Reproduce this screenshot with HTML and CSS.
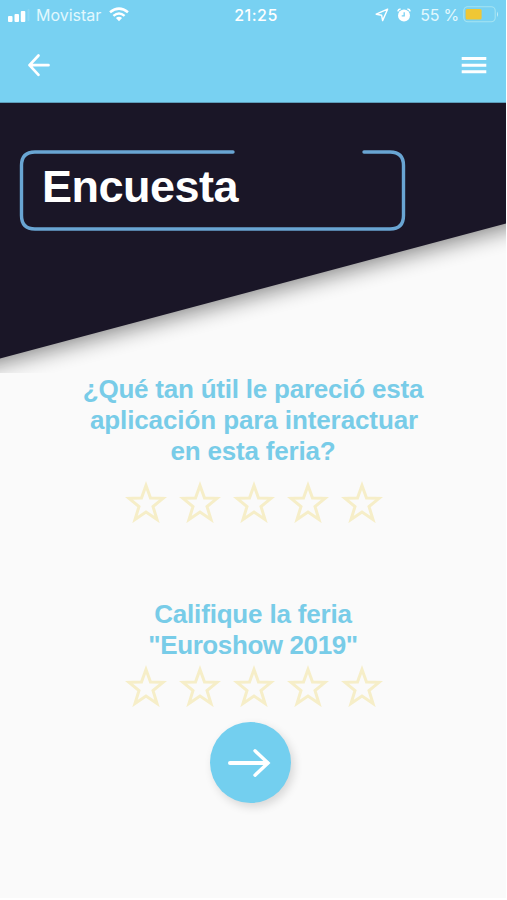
FILE: index.html
```html
<!DOCTYPE html>
<html lang="es">
<head>
<meta charset="utf-8">
<meta name="viewport" content="width=device-width, initial-scale=1">
<title>Encuesta</title>
<link rel="stylesheet" href="styles.css">
</head>
<body>
<svg class="defs" width="0" height="0" aria-hidden="true">
  <symbol id="star" viewBox="0 0 42 42">
    <path d="M21 4.500 L25.500 17 L38 17.300 L28 25.500 L32 38.500 L21 31 L10 38.500 L14 25.500 L4 17.300 L16.500 17 Z" fill="none" stroke="currentColor" stroke-width="3"/>
  </symbol>
</svg>
<div class="screen">
  <header class="topbar">
    <div class="status">
      <div class="status-left">
        <svg class="signal" width="24" height="14" viewBox="0 0 24 14"><g fill="#fff"><rect x="0" y="8" width="4.500" height="6" rx="1"/><rect x="6.500" y="6" width="4.500" height="8" rx="1"/><rect x="12.800" y="3" width="4.500" height="11" rx="1"/><rect x="19.500" y="1" width="2" height="12" rx="1" opacity=".15"/></g></svg>
        <span class="carrier">Movistar</span>
        <svg class="wifi" width="20" height="15" viewBox="0 0 20 15" fill="none" stroke="#fff" stroke-width="2.500"><path d="M1 5.300 Q10 -2 19 5.300"/><path d="M4.400 8.900 Q10 4.200 15.600 8.900"/><path d="M6.900 11 Q10 8.600 13.100 11 L10 14.200Z" fill="#fff" stroke="none"/></svg>
      </div>
      <span class="time">21:25</span>
      <div class="status-right">
        <svg class="location" width="14" height="14" viewBox="0 0 14 14" fill="none" stroke="#fff" stroke-width="1.400" stroke-linejoin="round"><path d="M12.600 1.200 L1.200 6.200 L6.600 7.200 L7.600 12.600 Z"/></svg>
        <svg class="alarm" width="14" height="14" viewBox="0 0 14 14"><circle cx="7" cy="7.600" r="6" fill="#fff"/><path d="M.8 3.300 Q1.200 1.200 3.600 1M13.200 3.300 Q12.800 1.200 10.400 1" fill="none" stroke="#fff" stroke-width="1.500"/><path d="M7.200 4.200 V7.800 H4.700" fill="none" stroke="#78d1f2" stroke-width="1.300"/></svg>
        <span class="percent">55 %</span>
        <svg class="battery" width="36" height="17" viewBox="0 0 36 17"><rect x=".8" y=".8" width="31.400" height="15" rx="4" fill="none" stroke="#a5e4f2" stroke-width="1.100"/><rect x="2.600" y="3" width="16" height="10.600" rx="1.500" fill="#efc735"/><path d="M34 5.500 Q36 8.300 34 11Z" fill="#c4edf7"/></svg>
      </div>
    </div>
    <nav class="nav">
      <svg width="24" height="24" viewBox="0 0 24 24" fill="none" stroke="#fff" stroke-width="2.700" stroke-linecap="round" stroke-linejoin="round" role="img" aria-label="Volver"><path d="M21.500 12.200 H2.500 M11.500 2.500 L2.500 12.200 L11.500 21.800"/></svg>
      <svg width="26" height="18" viewBox="0 0 26 18" stroke="#fff" stroke-width="2.900" role="img" aria-label="Menú"><path d="M.7 2.500 H25.300 M.7 9.200 H25.300 M.7 15.800 H25.300"/></svg>
    </nav>
  </header>
  <section class="hero">
    <svg class="hero-shape" width="506" height="270" viewBox="0 0 506 270" aria-hidden="true">
      <defs>
        <filter id="soft" x="-20%" y="-20%" width="140%" height="140%"><feGaussianBlur stdDeviation="11"/></filter>
      </defs>
      <path d="M-50 -40 H556 V112 L-50 273 Z" fill="#000" opacity=".48" filter="url(#soft)"/>
      <path d="M0 0 H506 V120.500 L0 255.500 Z" fill="#1a1627"/>
      <path d="M233 49 H35 Q21.500 49 21.500 62.500 V112.500 Q21.500 126 35 126 H390 Q403.500 126 403.500 112.500 V62.500 Q403.500 49 390 49 H364" fill="none" stroke="#69a5d3" stroke-width="3.400" stroke-linecap="round"/>
    </svg>
    <h1 class="title">Encuesta</h1>
  </section>
  <main class="survey">
    <section class="question">
      <h2><span class="l1">¿Qué tan útil le pareció esta</span><span class="l2">aplicación para interactuar</span><span class="l3">en esta feria?</span></h2>
      <div class="stars"><svg><use href="#star"/></svg><svg><use href="#star"/></svg><svg><use href="#star"/></svg><svg><use href="#star"/></svg><svg><use href="#star"/></svg></div>
    </section>
    <section class="question second">
      <h2><span class="l4">Califique la feria</span><span class="l5">"Euroshow 2019"</span></h2>
      <div class="stars"><svg><use href="#star"/></svg><svg><use href="#star"/></svg><svg><use href="#star"/></svg><svg><use href="#star"/></svg><svg><use href="#star"/></svg></div>
    </section>
    <button class="next" aria-label="Siguiente"><svg width="44" height="30" viewBox="0 0 44 30" fill="none" stroke="#fff" stroke-linecap="round"><path d="M3 15 H40" stroke-width="4"/><path d="M28 2.800 L41 15 L28 27.200" stroke-width="3.400"/></svg></button>
  </main>
</div>
</body>
</html>
```
FILE: styles.css
```css
* { box-sizing: border-box; }
body { margin: 0; background: #fff; font-family: "Liberation Sans", Arial, sans-serif; }
svg { display: block; flex: none; }
.defs { position: absolute; }
.screen { width: 506px; height: 898px; background: #fafafa; overflow: hidden; }
.topbar { height: 103px; background: #78d1f2; border-bottom: 1px solid #5d9dba; }
.status { display: grid; grid-template-columns: 1fr auto 1fr; height: 29px; align-items: center; padding: 0 8px; color: #fff; font: 16px/20px Inter, sans-serif; }
.status-left, .status-right { display: flex; align-items: center; }
.status-right { justify-content: flex-end; margin-right: -1px; }
.carrier { margin-left: 4px; color: #e2f8fd; }
.wifi { margin-left: 8px; }
.time { font-weight: 500; letter-spacing: .5px; padding-left: 6px; }
.location { margin-right: 1px; }
.alarm { margin-left: 7px; }
.percent { margin: 0 4px 0 9px; letter-spacing: -.2px; color: #e2f8fd; }
.nav { display: flex; justify-content: space-between; align-items: center; height: 72px; padding: 0 19px 0 27px; }
.hero { display: grid; height: 270px; }
.hero-shape, .title { grid-area: 1 / 1; }
.title { margin: 57px 0 0 42px; color: #fff; font-size: 45px; line-height: 54px; font-weight: 700; letter-spacing: -.5px; }
.survey { display: flex; flex-direction: column; align-items: center; }
.question { display: flex; flex-direction: column; align-items: center; padding-top: 1px; }
.question h2 { margin: 0; color: #78cce8; font-size: 26px; line-height: 31px; font-weight: 700; text-align: center; }
.question h2 span { display: block; white-space: nowrap; }
.l1 { letter-spacing: -.22px; }
.l2 { letter-spacing: -.1px; padding-left: 2px; }
.l3, .l4 { letter-spacing: -.18px; }
.l5 { letter-spacing: -.4px; }
.stars { display: flex; gap: 12px; margin-top: 14px; padding-left: 2px; color: #f6eec8; }
.stars svg { width: 42px; height: 42px; }
.second { margin-top: 75px; }
.second .stars { margin-top: 4px; }
.next { display: flex; align-items: center; justify-content: center; width: 81px; height: 81px; margin: 15px 5px 0 0; padding: 0 4px 0 0; border: 0; border-radius: 50%; background: #73cfef; box-shadow: 3px 4px 10px rgba(0,0,0,.14); }
```
